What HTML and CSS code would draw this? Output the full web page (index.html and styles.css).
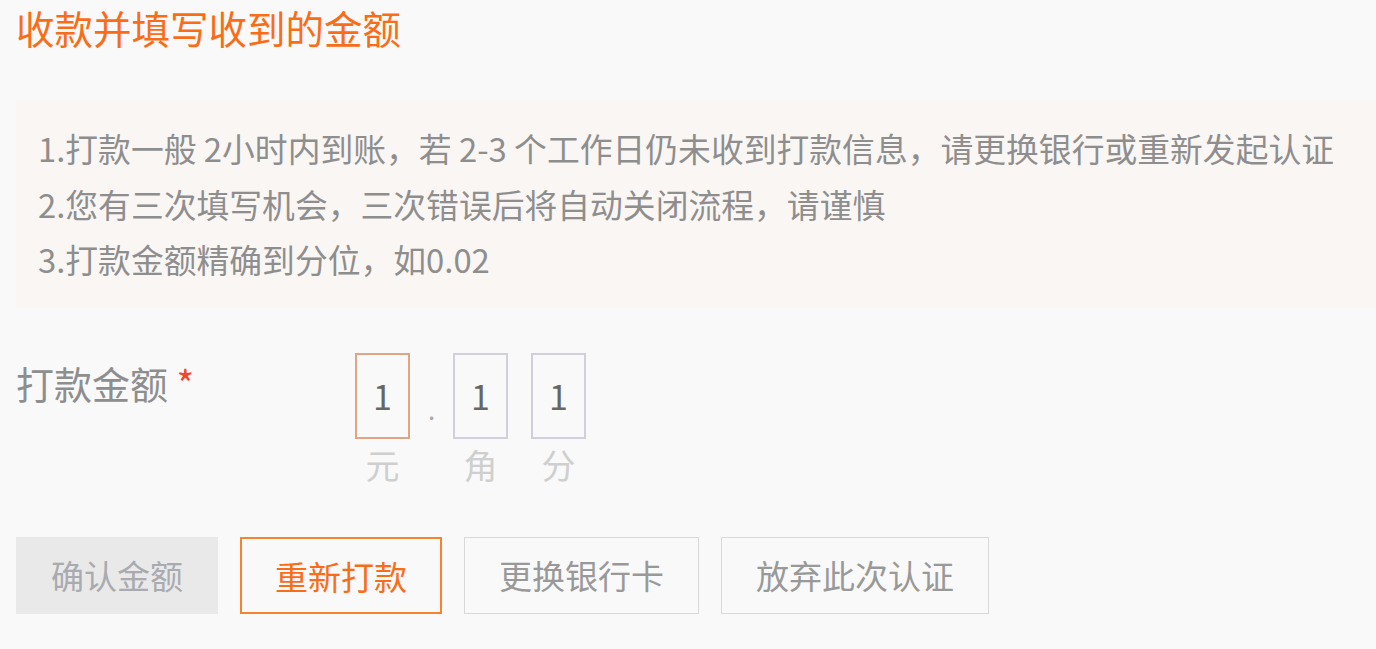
FILE: index.html
```html
<!DOCTYPE html>
<html lang="zh-CN">
<head>
  <meta charset="UTF-8" />
  <meta name="viewport" content="width=device-width, initial-scale=1.0"/>
  <title>收款并填写收到的金额</title>
  <link rel="stylesheet" href="styles.css">
</head>
<body>
  <div class="page">
    <h1 class="title">收款并填写收到的金额</h1>

    <div class="notice">
      <p>1.打款一般 2小时内到账，若 2-3 个工作日仍未收到打款信息，请更换银行或重新发起认证</p>
      <p>2.您有三次填写机会，三次错误后将自动关闭流程，请谨慎</p>
      <p>3.打款金额精确到分位，如0.02</p>
    </div>

    <div class="form-row">
      <label class="form-label">打款金额 <span class="required">*</span></label>
      <div class="amount">
        <div class="amount-col">
          <input class="amount-box active" type="text" maxlength="1" value="1">
          <span class="amount-unit">元</span>
        </div>
        <span class="amount-sep">.</span>
        <div class="amount-col">
          <input class="amount-box" type="text" maxlength="1" value="1">
          <span class="amount-unit">角</span>
        </div>
        <div class="amount-col">
          <input class="amount-box" type="text" maxlength="1" value="1">
          <span class="amount-unit">分</span>
        </div>
      </div>
    </div>

    <div class="actions">
      <button class="btn btn-disabled" disabled>确认金额</button>
      <button class="btn btn-primary">重新打款</button>
      <button class="btn">更换银行卡</button>
      <button class="btn">放弃此次认证</button>
    </div>
  </div>
</body>
</html>
```

FILE: styles.css
```css
:root {
  --orange: #fa6d18;
  --page-bg: #f9f9f9;
  --notice-bg: #faf6f4;
  --text-gray: #8e8e8e;
  --light-gray: #cfcfcf;
  --border-gray: #d9d9d9;
}

* {
  margin: 0;
  padding: 0;
  box-sizing: border-box;
}

body {
  font-family: "Noto Sans CJK SC", sans-serif;
  background-color: var(--page-bg);
  color: var(--text-gray);
}

.page {
  padding-left: 16px;
}

.title {
  font-size: 38.5px;
  font-weight: 400;
  line-height: 54px;
  color: var(--orange);
}

.notice {
  margin-top: 46px;
  background-color: var(--notice-bg);
  padding: 20px 22px 21px;
  font-size: 32.8px;
  line-height: 55.5px;
  color: var(--text-gray);
  white-space: nowrap;
}

.form-row {
  display: flex;
  align-items: flex-start;
  margin-top: 45px;
}

.form-label {
  width: 339px;
  font-size: 38px;
  line-height: 60px;
  color: var(--text-gray);
}

.required {
  color: #f0492a;
}

.amount {
  display: flex;
  align-items: flex-start;
}

.amount-col {
  display: flex;
  flex-direction: column;
  align-items: center;
}

.amount-col + .amount-col {
  margin-left: 23px;
}

.amount-box {
  width: 55px;
  height: 86px;
  border: 2px solid #cfd0dc;
  background: transparent;
  text-align: center;
  font-family: inherit;
  font-size: 34px;
  color: #666;
  outline: none;
}

.amount-box.active {
  border-color: #e2a583;
}

.amount-unit {
  margin-top: 2px;
  font-size: 34px;
  line-height: 48px;
  color: var(--light-gray);
}

.amount-sep {
  width: 43px;
  height: 86px;
  text-align: center;
  font-size: 26px;
  line-height: 26px;
  padding-top: 43px;
  color: #aaa;
}

.actions {
  display: flex;
  gap: 22px;
  margin-top: 48px;
}

.btn {
  height: 77px;
  padding: 0 34px;
  font-family: inherit;
  font-size: 33px;
  line-height: 75px;
  color: #999;
  background: transparent;
  border: 1px solid var(--border-gray);
  cursor: pointer;
}

.btn-disabled {
  background-color: #e9e9e9;
  border-color: #e9e9e9;
  color: #a9abb0;
  cursor: default;
}

.btn-primary {
  border: 2px solid #f5842f;
  color: var(--orange);
  padding: 0 33px;
}
```
